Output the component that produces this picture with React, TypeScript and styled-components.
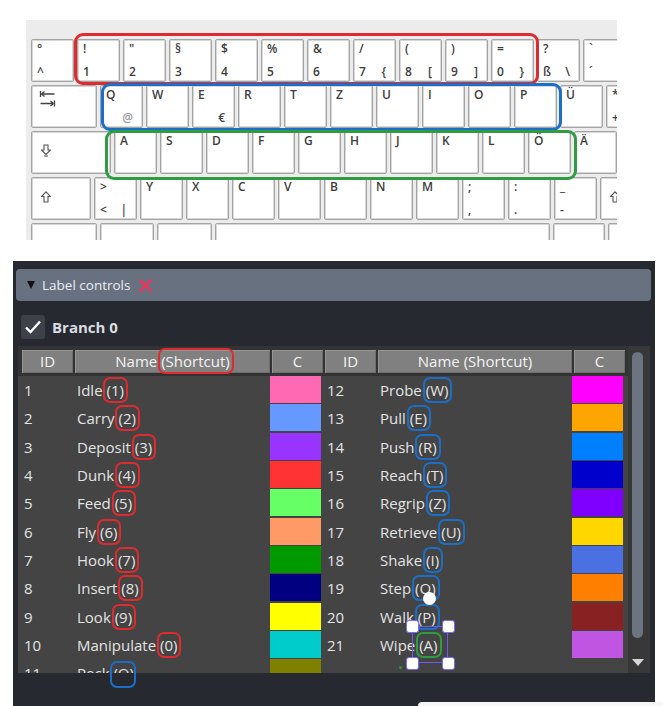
import React from "react";
import styled, { createGlobalStyle } from "styled-components";

const Global = createGlobalStyle`
  html, body { margin: 0; padding: 0; background: #ffffff; }
  body {
    font-family: "Open Sans", "Noto Sans", sans-serif;
    width: 663px; height: 706px; overflow: hidden;
  }
`;

const Page = styled.div`
  display: flex;
  flex-direction: column;
  align-items: flex-start;
  padding-top: 20px;
  height: 706px;
  box-sizing: border-box;
`;

/* ---------------- Keyboard ---------------- */

const Keyboard = styled.div`
  position: relative;
  margin-left: 26px;
  width: 591px;
  height: 220px;
  flex: none;
  box-sizing: border-box;
  padding: 19px 0 0 5px;
  background: #ececec;
  overflow: hidden;
  display: flex;
  flex-direction: column;
  gap: 3px;
`;

const KeyRow = styled.div`
  display: flex;
  gap: 3px;
  flex: none;
  height: 43px;
`;

const Key = styled.div<{ $w?: number }>`
  flex: none;
  width: ${(p) => p.$w ?? 43}px;
  height: 43px;
  box-sizing: border-box;
  background: #ffffff;
  border: 1px solid #a4a4a4;
  box-shadow: inset 0 0 0 1px #d8d8d8;
  border-radius: 2px;
  padding: 2px 5px 2px 5px;
  display: flex;
  flex-direction: column;
  justify-content: space-between;
  font-size: 12px;
  line-height: 14px;
  font-weight: 600;
  color: #3d3d3d;
`;

const ModKey = styled(Key)<{ $top?: boolean }>`
  justify-content: ${(p) => (p.$top ? "flex-start" : "center")};
  padding: ${(p) => (p.$top ? "4px 0 0 7px" : "0 0 4px 9px")};
`;

const KeyBottom = styled.div`
  display: flex;
  justify-content: space-between;
  padding-right: 4px;
`;

const Faint = styled.span`
  color: #9a9a9a;
`;

const Ring = styled.div<{ $c: string; $l: number; $t: number; $w: number; $h: number }>`
  position: absolute;
  left: ${(p) => p.$l}px;
  top: ${(p) => p.$t}px;
  width: ${(p) => p.$w}px;
  height: ${(p) => p.$h}px;
  box-sizing: border-box;
  border: 3px solid ${(p) => p.$c};
  border-radius: 9px;
  pointer-events: none;
`;

type KeyDef = { t?: string; b?: string; x?: string; faint?: boolean };

const row1: KeyDef[] = [
  { t: "°", b: "^" },
  { t: "!", b: "1" },
  { t: "\"", b: "2" },
  { t: "§", b: "3" },
  { t: "$", b: "4" },
  { t: "%", b: "5" },
  { t: "&", b: "6" },
  { t: "/", b: "7", x: "{" },
  { t: "(", b: "8", x: "[" },
  { t: ")", b: "9", x: "]" },
  { t: "=", b: "0", x: "}" },
  { t: "?", b: "ß", x: "\\" },
  { t: "`", b: "´" },
];

const row2: KeyDef[] = [
  { t: "Q", x: "@", faint: true },
  { t: "W" },
  { t: "E", x: "€" },
  { t: "R" },
  { t: "T" },
  { t: "Z" },
  { t: "U" },
  { t: "I" },
  { t: "O" },
  { t: "P" },
  { t: "Ü" },
  { t: "*", b: "+" },
];

const row3: KeyDef[] = "ASDFGHJKLÖÄ".split("").map((c) => ({ t: c }));

const row4: KeyDef[] = [
  { t: ">", b: "<", x: "|" },
  ...("YXCVBNM".split("").map((c) => ({ t: c })) as KeyDef[]),
  { t: ";", b: "," },
  { t: ":", b: "." },
  { t: "_", b: "-" },
];

const KeyCap: React.FC<{ k: KeyDef }> = ({ k }) => (
  <Key>
    <span>{k.t}</span>
    <KeyBottom>
      <span>{k.b ?? ""}</span>
      {k.x && (k.faint ? <Faint>{k.x}</Faint> : <span>{k.x}</span>)}
    </KeyBottom>
  </Key>
);

const TabIcon = () => (
  <svg width="17" height="18" viewBox="0 0 17 18" fill="none" stroke="#444" strokeWidth="1.3">
    <path d="M1.5 1v6M15.5 4H2.5M2.5 4l3-2.5M2.5 4l3 2.5" />
    <path d="M15.5 10.5v6M1.5 13.5h13M14.5 13.5l-3-2.5M14.5 13.5l-3 2.5" />
  </svg>
);

const CapsIcon = () => (
  <svg width="10" height="13" viewBox="0 0 10 13" fill="none" stroke="#555" strokeWidth="1.1">
    <path d="M3 1h4v5h2.5L5 10.5 0.5 6H3z" />
    <path d="M3 12h4" />
  </svg>
);

const ShiftIcon = () => (
  <svg width="10" height="12" viewBox="0 0 10 12" fill="none" stroke="#555" strokeWidth="1.1">
    <path d="M5 0.8l4.5 4.7H7V11H3V5.5H0.5z" />
  </svg>
);

/* ---------------- Panel ---------------- */

const Panel = styled.div`
  position: relative;
  margin-top: 21px;
  margin-left: 13px;
  width: 642px;
  flex: 1;
  background: #262a30;
  box-sizing: border-box;
  padding: 8px 4px 0 3px;
  display: flex;
  flex-direction: column;
`;

const TitleBar = styled.div`
  height: 32px;
  flex: none;
  background: #687180;
  border-radius: 4px;
  display: flex;
  align-items: center;
  padding-left: 11px;
  color: #e9ecf0;
  font-size: 13.5px;
`;

const Caret = styled.span`
  width: 0;
  height: 0;
  border-left: 4px solid transparent;
  border-right: 4px solid transparent;
  border-top: 8px solid #111;
  margin-right: 7px;
`;

const CloseX = styled.svg`
  margin-left: 9px;
`;

const BranchRow = styled.div`
  margin-top: 14px;
  padding-left: 5px;
  display: flex;
  align-items: center;
  gap: 7px;
  height: 24px;
  flex: none;
`;

const CheckBox = styled.div`
  width: 24px;
  height: 24px;
  border-radius: 3px;
  background: #3d4149;
  display: flex;
  align-items: center;
  justify-content: center;
`;

const BranchLabel = styled.span`
  font-weight: 700;
  font-size: 15px;
  color: #d9dce1;
`;

const TableFrame = styled.div`
  position: relative;
  margin-top: 7px;
  margin-left: 2px;
  width: 632px;
  height: 327px;
  flex: none;
  background: #333333;
  display: flex;
`;

const TableMain = styled.div`
  width: 610px;
  padding-top: 4px;
  display: flex;
  flex-direction: column;
`;

const cols = "51px 195px 51px 51px 194px 51px";

const HeaderRow = styled.div`
  display: grid;
  grid-template-columns: ${cols};
  column-gap: 2px;
  padding-left: 4px;
  height: 23px;
  flex: none;
`;

const HeaderCell = styled.div`
  background: #808080;
  box-shadow: inset 1px 1px 0 #959595, inset -1px -1px 0 #6e6e6e;
  color: #f4f4f4;
  font-size: 15px;
  line-height: 23px;
  text-align: center;
  white-space: nowrap;
`;

const Body = styled.div`
  margin-top: 3px;
  flex: 1;
  background: #444444;
  overflow: hidden;
  padding-left: 4px;
`;

const Row = styled.div`
  display: grid;
  grid-template-columns: ${cols};
  column-gap: 2px;
  height: 28.33px;
  align-items: center;
`;

const Cell = styled.div`
  padding-left: 2px;
  color: #e3e3e3;
  font-size: 15px;
  line-height: 20px;
  white-space: nowrap;
`;

const Swatch = styled.div<{ $c: string }>`
  align-self: start;
  height: 27px;
  width: 51px;
  margin-left: -2px;
  background: ${(p) => p.$c};
`;

const Mark = styled.span<{ $c: string }>`
  position: relative;
  &::after {
    content: "";
    position: absolute;
    inset: -3px -4px -3px -3px;
    border: 2.5px solid ${(p) => p.$c};
    border-radius: 7px;
  }
`;

const ScrollCol = styled.div`
  width: 22px;
  background: #383838;
  display: flex;
  flex-direction: column;
`;

const Thumb = styled.div`
  margin: 6px 0 0 4px;
  width: 11px;
  height: 286px;
  border-radius: 6px;
  background: #6b7480;
`;

const DownArrow = styled.div`
  margin: 21px 0 0 4px;
  width: 0;
  height: 0;
  border-left: 6px solid transparent;
  border-right: 6px solid transparent;
  border-top: 7px solid #d6d6d6;
`;

const FloatMark = styled.div<{ $c: string; $l: number; $t: number; $w: number; $h: number }>`
  position: absolute;
  left: ${(p) => p.$l}px;
  top: ${(p) => p.$t}px;
  width: ${(p) => p.$w}px;
  height: ${(p) => p.$h}px;
  box-sizing: border-box;
  border: 2.5px solid ${(p) => p.$c};
  border-radius: 7px;
`;

const Selection = styled.div`
  position: absolute;
  left: 394px;
  top: 280px;
  width: 36px;
  height: 37px;
  box-sizing: border-box;
  border: 1.5px solid #6a5cf0;
`;

const Handle = styled.div<{ $x: "l" | "r"; $y: "t" | "b" }>`
  position: absolute;
  ${(p) => (p.$x === "l" ? "left: -7.5px;" : "right: -7.5px;")}
  ${(p) => (p.$y === "t" ? "top: -7.5px;" : "bottom: -7.5px;")}
  width: 13px;
  height: 13px;
  box-sizing: border-box;
  background: #ffffff;
  border: 1.5px solid #7a6cf5;
  border-radius: 3px;
`;

const RotateHandle = styled.div`
  position: absolute;
  left: 405px;
  top: 246px;
  width: 13px;
  height: 13px;
  border-radius: 50%;
  background: #ffffff;
`;

const GreenDot = styled.div`
  position: absolute;
  left: 381px;
  top: 320px;
  width: 3px;
  height: 3px;
  border-radius: 50%;
  background: #2e9a3e;
`;

const Corner = styled.div`
  position: absolute;
  left: 405px;
  right: -8px;
  bottom: 0;
  height: 4px;
  background: #f6f6f6;
  border-top-left-radius: 4px;
`;

const RED = "#df2a2f";
const BLUE = "#1c6fc6";
const GREEN = "#2f9c42";

type Item = { id: number; name: string; key: string; color: string; mark?: string };

const left: Item[] = [
  { id: 1, name: "Idle", key: "1", color: "#ff69b4", mark: RED },
  { id: 2, name: "Carry", key: "2", color: "#6699ff", mark: RED },
  { id: 3, name: "Deposit", key: "3", color: "#9933ff", mark: RED },
  { id: 4, name: "Dunk", key: "4", color: "#ff3333", mark: RED },
  { id: 5, name: "Feed", key: "5", color: "#66ff66", mark: RED },
  { id: 6, name: "Fly", key: "6", color: "#ff9966", mark: RED },
  { id: 7, name: "Hook", key: "7", color: "#009900", mark: RED },
  { id: 8, name: "Insert", key: "8", color: "#000080", mark: RED },
  { id: 9, name: "Look", key: "9", color: "#ffff00", mark: RED },
  { id: 10, name: "Manipulate", key: "0", color: "#00cccc", mark: RED },
  { id: 11, name: "Peck", key: "Q", color: "#808000" },
];

const right: Item[] = [
  { id: 12, name: "Probe", key: "W", color: "#ff00ff", mark: BLUE },
  { id: 13, name: "Pull", key: "E", color: "#ffa500", mark: BLUE },
  { id: 14, name: "Push", key: "R", color: "#0080ff", mark: BLUE },
  { id: 15, name: "Reach", key: "T", color: "#0000cc", mark: BLUE },
  { id: 16, name: "Regrip", key: "Z", color: "#8000ff", mark: BLUE },
  { id: 17, name: "Retrieve", key: "U", color: "#ffd700", mark: BLUE },
  { id: 18, name: "Shake", key: "I", color: "#4a70e2", mark: BLUE },
  { id: 19, name: "Step", key: "O", color: "#ff8000", mark: BLUE },
  { id: 20, name: "Walk", key: "P", color: "#882222", mark: BLUE },
  { id: 21, name: "Wipe", key: "A", color: "#bf55e0", mark: GREEN },
];

const NameCell: React.FC<{ it: Item }> = ({ it }) => (
  <Cell>
    {it.name}{" "}
    {it.mark ? <Mark $c={it.mark}>({it.key})</Mark> : <span>({it.key})</span>}
  </Cell>
);

export default function App() {
  return (
    <>
      <Global />
      <Page>
        <Keyboard>
          <KeyRow>
            {row1.map((k, i) => (
              <KeyCap key={i} k={k} />
            ))}
          </KeyRow>
          <KeyRow>
            <ModKey $w={66} $top>
              <TabIcon />
            </ModKey>
            {row2.map((k, i) => (
              <KeyCap key={i} k={k} />
            ))}
          </KeyRow>
          <KeyRow>
            <ModKey $w={80}>
              <CapsIcon />
            </ModKey>
            {row3.map((k, i) => (
              <KeyCap key={i} k={k} />
            ))}
            <Key $w={43} />
          </KeyRow>
          <KeyRow>
            <ModKey $w={60}>
              <ShiftIcon />
            </ModKey>
            {row4.map((k, i) => (
              <KeyCap key={i} k={k} />
            ))}
            <ModKey $w={90}>
              <ShiftIcon />
            </ModKey>
          </KeyRow>
          <KeyRow>
            <Key $w={66} />
            <Key $w={54} />
            <Key $w={55} />
            <Key $w={335} />
            <Key $w={52} />
            <Key $w={60} />
          </KeyRow>
          <Ring $c={RED} $l={48} $t={13} $w={465} $h={52} />
          <Ring $c={BLUE} $l={75} $t={63} $w={461} $h={48} />
          <Ring $c={GREEN} $l={79} $t={110} $w={472} $h={50} />
        </Keyboard>

        <Panel>
          <TitleBar>
            <Caret />
            Label controls
            <CloseX width="13" height="13" viewBox="0 0 13 13">
              <path d="M1.5 1.5l10 10M11.5 1.5l-10 10" stroke="#e8365d" strokeWidth="2.6" strokeLinecap="round" />
            </CloseX>
          </TitleBar>

          <BranchRow>
            <CheckBox>
              <svg width="18" height="16" viewBox="0 0 18 16">
                <path d="M2 8.5l4.5 4.5L16 2.5" fill="none" stroke="#ffffff" strokeWidth="2.4" />
              </svg>
            </CheckBox>
            <BranchLabel>Branch 0</BranchLabel>
          </BranchRow>

          <TableFrame>
            <TableMain>
              <HeaderRow>
                <HeaderCell>ID</HeaderCell>
                <HeaderCell>
                  Name <Mark $c={RED}>(Shortcut)</Mark>
                </HeaderCell>
                <HeaderCell>C</HeaderCell>
                <HeaderCell>ID</HeaderCell>
                <HeaderCell>Name (Shortcut)</HeaderCell>
                <HeaderCell>C</HeaderCell>
              </HeaderRow>
              <Body>
                {left.map((l, i) => {
                  const r = right[i];
                  return (
                    <Row key={l.id}>
                      <Cell>{l.id}</Cell>
                      <NameCell it={l} />
                      <Swatch $c={l.color} />
                      {r ? <Cell>{r.id}</Cell> : <div />}
                      {r ? <NameCell it={r} /> : <div />}
                      {r ? <Swatch $c={r.color} /> : <div />}
                    </Row>
                  );
                })}
              </Body>
            </TableMain>
            <ScrollCol>
              <Thumb />
              <DownArrow />
            </ScrollCol>

            <FloatMark $c={BLUE} $l={92} $t={315} $w={26} $h={27} />
            <RotateHandle />
            <Selection>
              <Handle $x="l" $y="t" />
              <Handle $x="r" $y="t" />
              <Handle $x="l" $y="b" />
              <Handle $x="r" $y="b" />
            </Selection>
            <GreenDot />
          </TableFrame>
          <Corner />
        </Panel>
      </Page>
    </>
  );
}
